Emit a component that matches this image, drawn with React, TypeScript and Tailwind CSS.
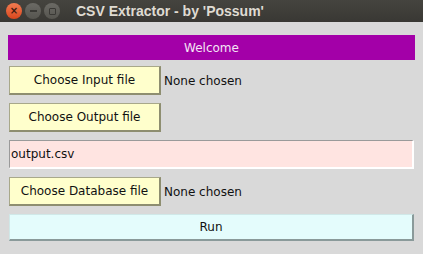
import React from "react";

const font = { fontFamily: '"DejaVu Sans", Verdana, sans-serif' };

function FileButton({ label }: { label: string }) {
  return (
    <button
      className="w-[152px] h-[29px] bg-[#ffffcc] border border-[#a8a88a] border-b-2 border-r-2 border-b-[#8e8e70] border-r-[#8e8e70] text-[12px] text-[#111]"
      style={font}
    >
      {label}
    </button>
  );
}

export default function App() {
  return (
    <div className="w-[423px] h-[254px] bg-[#d9d9d9] flex flex-col overflow-hidden" style={font}>
      {/* window title bar */}
      <div className="h-[22px] bg-gradient-to-b from-[#45443f] to-[#393834] flex items-center pl-[6px] gap-[3px]">
        <div className="w-[16px] h-[16px] rounded-full bg-gradient-to-b from-[#f27b50] to-[#d9461b] flex items-center justify-center text-[10px] leading-none text-[#3a1a0e] font-bold">
          ×
        </div>
        <div className="w-[16px] h-[16px] rounded-full bg-gradient-to-b from-[#6b6a65] to-[#56554f] flex items-center justify-center">
          <div className="w-[7px] h-[1.5px] bg-[#3a3935]" />
        </div>
        <div className="w-[16px] h-[16px] rounded-full bg-gradient-to-b from-[#6b6a65] to-[#56554f] flex items-center justify-center">
          <div className="w-[7px] h-[7px] border border-[#3a3935] rounded-[1px]" />
        </div>
        <span
          className="ml-[13px] text-[14px] font-bold text-[#dfdbd2]"
          style={{ fontFamily: '"Liberation Sans", Arial, sans-serif' }}
        >
          CSV Extractor - by 'Possum'
        </span>
      </div>

      <div className="flex flex-col px-[8px] pt-[13px]">
        <div className="h-[25px] bg-[#a300a8] flex items-center justify-center text-[12px] text-[#f4e6f4]">
          Welcome
        </div>

        <div className="mx-[1px] mt-[6px] flex items-center gap-[3px]">
          <FileButton label="Choose Input file" />
          <span className="text-[12px] text-[#111]">None chosen</span>
        </div>

        <div className="mx-[1px] mt-[8px] flex items-center">
          <FileButton label="Choose Output file" />
        </div>

        <div className="mx-[1px] mt-[8px] h-[29px] bg-[#ffe4e1] border border-[#9a9a9a] border-b-2 border-r-2 border-b-white border-r-white flex items-center px-[1px] text-[12px] text-[#111]">
          output.csv
        </div>

        <div className="mx-[1px] mt-[8px] flex items-center gap-[3px]">
          <FileButton label="Choose Database file" />
          <span className="text-[12px] text-[#111]">None chosen</span>
        </div>

        <button className="mx-[1px] mt-[8px] h-[27px] bg-[#e4fcfc] border border-[#d0e8e8] border-b-2 border-r-2 border-b-[#8a9a9a] border-r-[#8a9a9a] text-[12px] text-[#111]" style={font}>
          Run
        </button>
      </div>
    </div>
  );
}
